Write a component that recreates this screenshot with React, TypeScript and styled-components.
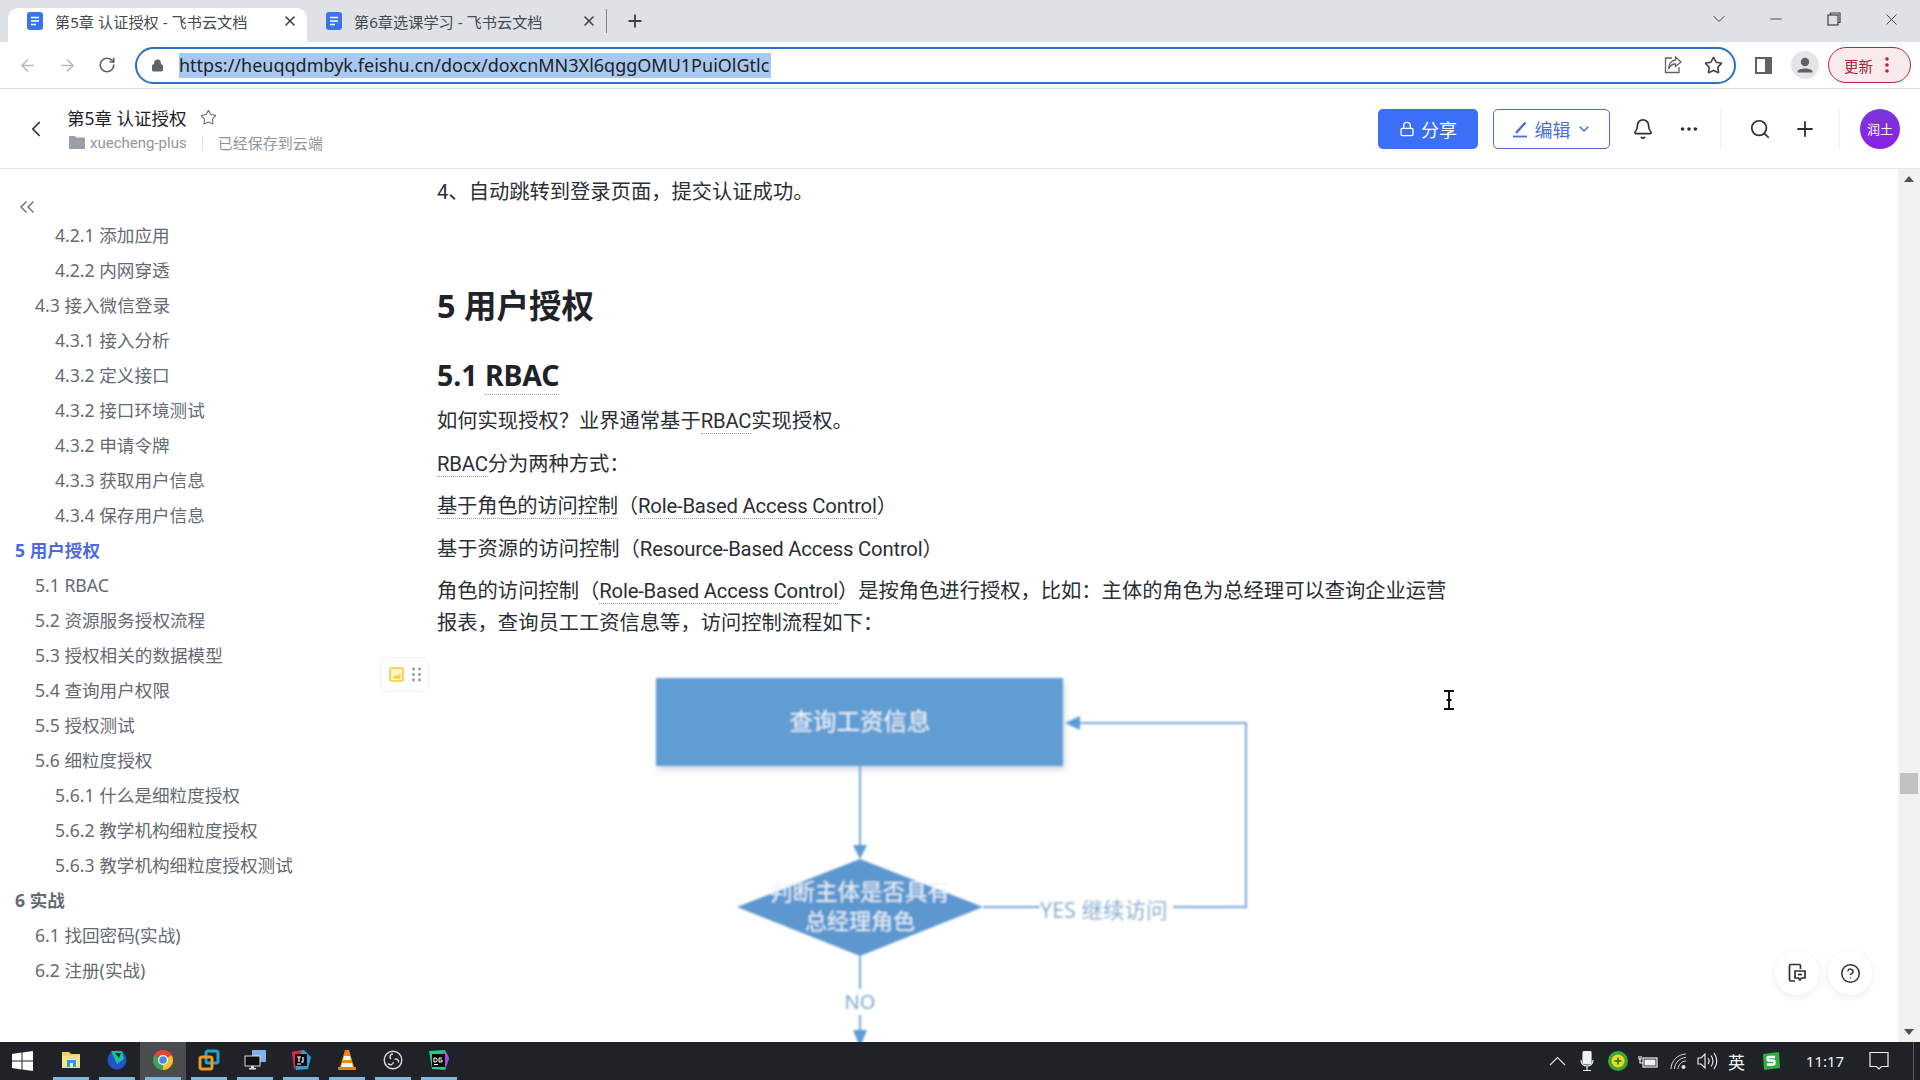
import styled, { createGlobalStyle } from "styled-components";
import {
  ArrowLeft,
  ArrowRight,
  Bell,
  ChevronDown,
  ChevronLeft,
  ChevronsLeft,
  CircleHelp,
  Lock,
  Minus,
  MoreHorizontal,
  Plus,
  RotateCw,
  Search,
  Star,
  X,
} from "lucide-react";

const GlobalStyle = createGlobalStyle`
  html, body {
    margin: 0;
    padding: 0;
    background: #fff;
    overflow: hidden;
  }
  * { box-sizing: border-box; }
`;

const Page = styled.div`
  width: 1920px;
  height: 1080px;
  display: flex;
  flex-direction: column;
  overflow: hidden;
  font-family: "Noto Sans", "Noto Sans CJK SC", sans-serif;
  color: #1f2329;
`;

/* browser chrome */
const TabStrip = styled.div`
  height: 42px;
  flex: none;
  background: #dee1e6;
  display: flex;
  padding-left: 8px;
`;
const Tab = styled.div<{ $active?: boolean }>`
  width: 299px;
  height: 34px;
  margin-top: 8px;
  padding: 0 0 8px 19px;
  display: flex;
  align-items: center;
  font-size: 15.2px;
  color: #45494e;
  background: ${(p) => (p.$active ? "#fff" : "transparent")};
  border-radius: 10px 10px 0 0;
`;
const TabTitle = styled.span`
  margin-left: 12px;
  width: 227px;
  white-space: nowrap;
`;
const TabDivider = styled.div`
  width: 1px;
  height: 24px;
  margin-top: 9px;
  background: #80868b;
`;
const NewTab = styled.div`
  width: 56px;
  display: flex;
  align-items: center;
  justify-content: center;
  color: #3c4043;
`;
const WindowControls = styled.div`
  margin-left: auto;
  display: flex;
`;
const WindowButton = styled.div`
  width: 57.5px;
  height: 38px;
  display: flex;
  align-items: center;
  justify-content: center;
  color: #3c4043;
`;
const Toolbar = styled.div`
  height: 47px;
  flex: none;
  display: flex;
  align-items: center;
  padding: 0 0 0 7px;
  border-bottom: 1px solid #dadce0;
`;
const NavButton = styled.div<{ $off?: boolean }>`
  width: 40px;
  display: flex;
  justify-content: center;
  color: ${(p) => (p.$off ? "#b4b7bb" : "#5f6368")};
`;
const Omnibox = styled.div`
  width: 1601px;
  height: 37px;
  margin-left: 8px;
  border: 2.5px solid #2a70c6;
  border-radius: 19px;
  display: flex;
  align-items: center;
  padding-left: 14px;
  color: #5f6368;
`;
const Url = styled.span`
  margin-left: 15px;
  padding: 0;
  height: 25px;
  line-height: 25px;
  width: 592px;
  overflow: hidden;
  white-space: nowrap;
  font-size: 18px;
  color: #202124;
  background: #a9c8ef;
`;
const OmniActions = styled.div`
  margin-left: auto;
  padding-right: 11px;
  display: flex;
  gap: 21px;
  align-items: center;
`;
const ProfileGroup = styled.div`
  margin-left: 7px;
  display: flex;
  align-items: center;
`;
const ProfileCell = styled.div`
  width: 41px;
  display: flex;
  justify-content: center;
`;
const UpdatePill = styled.div`
  width: 83px;
  height: 36px;
  margin-left: 3px;
  border: 1.5px solid #b3263e;
  border-radius: 18px;
  background: #fbeaec;
  color: #a8223a;
  font-size: 14.5px;
  display: flex;
  align-items: center;
  padding-left: 15px;
  gap: 12px;
`;

/* doc header */
const DocHeader = styled.div`
  height: 80px;
  flex: none;
  display: flex;
  align-items: center;
  padding-right: 20px;
  border-bottom: 1px solid #e6e7e9;
`;
const BackCell = styled.div`
  width: 67px;
  padding-left: 23px;
  display: flex;
  color: #2b2f36;
`;
const DocMeta = styled.div`
  display: flex;
  flex-direction: column;
  gap: 1px;
  padding-top: 1px;
`;
const DocTitleRow = styled.div`
  display: flex;
  align-items: center;
  gap: 13px;
  font-size: 17.5px;
  height: 26px;
  color: #1f2329;
`;
const DocSubRow = styled.div`
  display: flex;
  align-items: center;
  font-family: Roboto, "Noto Sans CJK SC", sans-serif;
  font-size: 15px;
  height: 22px;
  color: #8f959e;
  padding-left: 2px;
`;
const FolderName = styled.span`
  margin-left: 5px;
`;
const SubDivider = styled.span`
  width: 1px;
  height: 16px;
  background: #dee0e3;
  margin: 0 15px 0 15px;
`;
const HeaderActions = styled.div`
  margin-left: auto;
  display: flex;
  align-items: center;
`;
const ShareButton = styled.div`
  width: 100px;
  height: 40px;
  border-radius: 5px;
  background: #3b6ff5;
  color: #fff;
  font-size: 18px;
  display: flex;
  align-items: center;
  justify-content: center;
  gap: 6px;
`;
const EditButton = styled.div`
  width: 117px;
  height: 40px;
  margin-left: 15px;
  border-radius: 5px;
  border: 1px solid #4c6ed4;
  color: #4c6ed4;
  font-size: 18px;
  display: flex;
  align-items: center;
  justify-content: center;
  gap: 5px;
`;
const HeaderIcon = styled.div<{ $ml: number }>`
  width: 28px;
  margin-left: ${(p) => p.$ml}px;
  display: flex;
  justify-content: center;
  color: #2b2f36;
`;
const HeaderDivider = styled.div<{ $ml: number }>`
  width: 1px;
  height: 40px;
  margin-left: ${(p) => p.$ml}px;
  background: #eeeff0;
`;
const Avatar = styled.div`
  width: 40px;
  height: 40px;
  margin-left: 20px;
  border-radius: 50%;
  background: linear-gradient(#7b35d8, #8a22e6);
  color: #fff;
  font-size: 13px;
  display: flex;
  align-items: center;
  justify-content: center;
`;

/* main area */
const Main = styled.div`
  flex: 1;
  min-height: 0;
  display: flex;
  position: relative;
  overflow: hidden;
`;
const Sidebar = styled.nav`
  width: 437px;
  flex: none;
  padding-top: 26px;
`;
const Collapse = styled.div`
  height: 24px;
  margin-bottom: -1.5px;
  padding-left: 15px;
  color: #646a73;
`;
const TocItem = styled.div<{ $level: number; $active?: boolean }>`
  height: 35px;
  line-height: 35px;
  font-size: 17.6px;
  white-space: nowrap;
  padding-left: ${(p) => [15, 35, 55][p.$level]}px;
  font-weight: ${(p) => (p.$level === 0 ? 700 : 400)};
  color: ${(p) => (p.$active ? "#4e69e0" : "#646a73")};
`;
const Content = styled.main`
  flex: 1;
  padding-top: 7px;
  overflow: hidden;
`;
const Para = styled.p`
  margin: 0 0 10.5px;
  width: 1020px;
  font-family: Roboto, "Noto Sans CJK SC", sans-serif;
  font-size: 20.3px;
  line-height: 32px;
  color: #2b2f36;
`;
const H1 = styled.h1`
  margin: 76px 0 0;
  font-size: 32.5px;
  line-height: 44px;
  font-weight: 700;
`;
const H2 = styled.h2`
  margin: 28px 0 0;
  font-size: 28.5px;
  line-height: 38px;
  font-weight: 700;
`;
const ParaGroup = styled.div`
  margin-top: 11px;
`;
const Latin = styled.span`
  letter-spacing: -0.2px;
`;
const Term = styled(Latin)`
  border-bottom: 1px dotted #9aa0a8;
`;
const Flow = styled.svg`
  display: block;
  margin-top: 8.5px;
`;
const ScrollTrack = styled.div`
  width: 22px;
  flex: none;
  background: #f1f1f1;
  position: relative;
  display: flex;
  flex-direction: column;
  justify-content: space-between;
  align-items: center;
  padding: 7px 0;
`;
const ScrollThumb = styled.div`
  position: absolute;
  left: 2px;
  top: 604px;
  width: 18px;
  height: 21px;
  background: #c1c1c1;
`;
const ScrollArrow = styled.div<{ $down?: boolean }>`
  width: 0;
  height: 0;
  border-left: 5px solid transparent;
  border-right: 5px solid transparent;
  ${(p) => (p.$down ? "border-top: 6px solid #505050;" : "border-bottom: 6px solid #505050;")}
`;
const BlockTool = styled.div`
  position: absolute;
  left: 380px;
  top: 488px;
  width: 49px;
  height: 35px;
  border-radius: 6px;
  border: 1px solid #f0f1f2;
  background: #fff;
  display: flex;
  align-items: center;
  justify-content: center;
  gap: 8px;
`;
const FloatButton = styled.div<{ $left: number }>`
  position: absolute;
  left: ${(p) => p.$left}px;
  top: 782px;
  width: 44px;
  height: 44px;
  border-radius: 50%;
  background: #fff;
  box-shadow: 0 2px 10px rgba(0, 0, 0, 0.08);
  display: flex;
  align-items: center;
  justify-content: center;
  color: #2b2f36;
`;
const TextCursor = styled.svg`
  position: absolute;
  left: 1443px;
  top: 521px;
`;

/* taskbar */
const Taskbar = styled.div`
  height: 38px;
  flex: none;
  background: #1f2328;
  display: flex;
  align-items: stretch;
  color: #fff;
`;
const StartCell = styled.div`
  width: 48px;
  display: flex;
  align-items: center;
  padding-left: 12px;
`;
const TaskCell = styled.div<{ $active?: boolean }>`
  width: 46px;
  position: relative;
  display: flex;
  align-items: center;
  justify-content: center;
  padding-bottom: 2px;
  background: ${(p) => (p.$active ? "#4b4c4e" : "transparent")};
  &::after {
    content: "";
    position: absolute;
    left: 5px;
    right: 5px;
    bottom: 0;
    height: 3px;
    background: #84b6dc;
  }
`;
const Tray = styled.div`
  margin-left: auto;
  display: flex;
  align-items: center;
  padding-right: 6px;
`;
const TrayItem = styled.div<{ $w: number; $fs?: number }>`
  width: ${(p) => p.$w}px;
  display: flex;
  justify-content: center;
  align-items: center;
  font-size: ${(p) => p.$fs ?? 15}px;
  color: #f2f2f2;
`;
const TrayEdge = styled.div`
  width: 1px;
  height: 38px;
  margin-left: 14px;
  background: #5a5d60;
`;

const DocIcon = () => (
  <svg width="16" height="18" viewBox="0 0 16 18">
    <rect width="16" height="18" rx="3" fill="#3b74ea" />
    <path d="M4 5.5h8M4 9h8M4 12.5h5" stroke="#fff" strokeWidth="1.4" />
  </svg>
);

const ChromeIcon = ({ size = 22 }: { size?: number }) => (
  <svg width={size} height={size} viewBox="0 0 24 24">
    <path d="M12 12L2.5 6.5A11 11 0 0 1 21.5 6.5Z" fill="#e0463a" />
    <path d="M12 12L21.5 6.5A11 11 0 0 1 12 23Z" fill="#f6c02d" />
    <path d="M12 12L12 23A11 11 0 0 1 2.5 6.5Z" fill="#3ca454" />
    <circle cx="12" cy="12" r="5.4" fill="#fff" />
    <circle cx="12" cy="12" r="4.2" fill="#4a88e8" />
  </svg>
);

const toc: { t: string; l: number; a?: boolean }[] = [
  { t: "4.2.1 添加应用", l: 2 },
  { t: "4.2.2 内网穿透", l: 2 },
  { t: "4.3 接入微信登录", l: 1 },
  { t: "4.3.1 接入分析", l: 2 },
  { t: "4.3.2 定义接口", l: 2 },
  { t: "4.3.2 接口环境测试", l: 2 },
  { t: "4.3.2 申请令牌", l: 2 },
  { t: "4.3.3 获取用户信息", l: 2 },
  { t: "4.3.4 保存用户信息", l: 2 },
  { t: "5 用户授权", l: 0, a: true },
  { t: "5.1 RBAC", l: 1 },
  { t: "5.2 资源服务授权流程", l: 1 },
  { t: "5.3 授权相关的数据模型", l: 1 },
  { t: "5.4 查询用户权限", l: 1 },
  { t: "5.5 授权测试", l: 1 },
  { t: "5.6 细粒度授权", l: 1 },
  { t: "5.6.1 什么是细粒度授权", l: 2 },
  { t: "5.6.2 教学机构细粒度授权", l: 2 },
  { t: "5.6.3 教学机构细粒度授权测试", l: 2 },
  { t: "6 实战", l: 0 },
  { t: "6.1 找回密码(实战)", l: 1 },
  { t: "6.2 注册(实战)", l: 1 },
];

const FlowChart = () => (
  <Flow width="860" height="420" viewBox="0 0 860 420">
    <defs>
      <filter id="soft" x="-5%" y="-5%" width="110%" height="110%">
        <feGaussianBlur stdDeviation="0.9" />
      </filter>
      <filter id="drop" x="-10%" y="-20%" width="120%" height="150%">
        <feGaussianBlur stdDeviation="3" />
      </filter>
    </defs>
    <g filter="url(#soft)">
      <rect x="221" y="32" width="407" height="88" fill="#a9b8c6" filter="url(#drop)" opacity="0.5" />
      <rect x="219" y="28" width="407" height="88" fill="#609dd3" />
      <text x="423" y="80" textAnchor="middle" fontSize="23.5" fill="#f2f6fa">查询工资信息</text>
      <path d="M423 116V197" stroke="#74aadb" strokeWidth="2" fill="none" />
      <path d="M416 195H430L423 209Z" fill="#5b9bd5" />
      <path d="M300 257L423 209L546 257L423 306Z" fill="#5b97cf" />
      <text x="423" y="250" textAnchor="middle" fontSize="22.5" fill="#eef4fa">判断主体是否具有</text>
      <text x="423" y="279" textAnchor="middle" fontSize="22" fill="#eef4fa">总经理角色</text>
      <path d="M546 257H809V73H642" stroke="#74aadb" strokeWidth="2" fill="none" />
      <path d="M628 73L643 66V80Z" fill="#5b9bd5" />
      <rect x="603" y="245" width="133" height="28" fill="#fff" />
      <text x="603" y="268" fontSize="21.5" fill="#7ba7cc">YES 继续访问</text>
      <path d="M423 306V339M423 365V383" stroke="#74aadb" strokeWidth="2" fill="none" />
      <text x="423" y="359" textAnchor="middle" fontSize="20" fill="#7ba7cc">NO</text>
      <path d="M416 380H430L423 397Z" fill="#5b9bd5" />
    </g>
  </Flow>
);

export default function App() {
  return (
    <Page>
      <GlobalStyle />
      <TabStrip>
        <Tab $active>
          <DocIcon />
          <TabTitle>第5章 认证授权 - 飞书云文档</TabTitle>
          <X size={16} strokeWidth={2.4} color="#3c4043" />
        </Tab>
        <Tab>
          <DocIcon />
          <TabTitle>第6章选课学习 - 飞书云文档</TabTitle>
          <X size={16} strokeWidth={2.4} color="#3c4043" />
        </Tab>
        <TabDivider />
        <NewTab>
          <Plus size={20} strokeWidth={2.2} />
        </NewTab>
        <WindowControls>
          <WindowButton>
            <ChevronDown size={20} strokeWidth={1.2} />
          </WindowButton>
          <WindowButton>
            <Minus size={18} strokeWidth={1.2} />
          </WindowButton>
          <WindowButton>
            <svg width="14" height="14" viewBox="0 0 14 14" fill="none" stroke="#3c4043" strokeWidth="1.2">
              <rect x="1" y="3" width="10" height="10" />
              <path d="M3.5 3V1H13V10.5H11" />
            </svg>
          </WindowButton>
          <WindowButton>
            <X size={19} strokeWidth={1.2} />
          </WindowButton>
        </WindowControls>
      </TabStrip>

      <Toolbar>
        <NavButton $off>
          <ArrowLeft size={19} />
        </NavButton>
        <NavButton $off>
          <ArrowRight size={19} />
        </NavButton>
        <NavButton>
          <RotateCw size={18} strokeWidth={2.2} />
        </NavButton>
        <Omnibox>
          <Lock size={13} fill="#5f6368" strokeWidth={2.4} />
          <Url>https://heuqqdmbyk.feishu.cn/docx/doxcnMN3Xl6qggOMU1PuiOlGtlc</Url>
          <OmniActions>
            <svg width="20" height="20" viewBox="0 0 20 20" fill="none" stroke="#5f6368" strokeWidth="1.3">
              <path d="M9 3H2.5V17.5H16V12" />
              <path d="M12.5 2L18 7L12.5 11.5V9C9 9 7 10.5 5.5 14C5.5 9.5 8 5.5 12.5 5Z" />
            </svg>
            <Star size={19} strokeWidth={2} color="#3c4043" />
          </OmniActions>
        </Omnibox>
        <ProfileGroup>
          <ProfileCell>
            <svg width="17" height="17" viewBox="0 0 17 17">
              <path d="M0 0H17V17H0Z" fill="#5f6368" />
              <path d="M2 2H10V15H2Z" fill="#fff" />
            </svg>
          </ProfileCell>
          <ProfileCell>
            <svg width="28" height="28" viewBox="0 0 28 28">
              <circle cx="14" cy="14" r="14" fill="#e3e5e8" />
              <circle cx="14" cy="11" r="4.2" fill="#5f6368" />
              <path d="M6.5 20.5C7 16.5 21 16.5 21.5 20.5V21.5H6.5Z" fill="#5f6368" />
            </svg>
          </ProfileCell>
          <UpdatePill>
            <span>更新</span>
            <svg width="4" height="18" viewBox="0 0 4 18" fill="#b3263e">
              <circle cx="2" cy="3" r="1.8" />
              <circle cx="2" cy="9" r="1.8" />
              <circle cx="2" cy="15" r="1.8" />
            </svg>
          </UpdatePill>
        </ProfileGroup>
      </Toolbar>

      <DocHeader>
        <BackCell>
          <ChevronLeft size={26} strokeWidth={1.6} />
        </BackCell>
        <DocMeta>
          <DocTitleRow>
            <span>第5章 认证授权</span>
            <Star size={17} strokeWidth={1.5} color="#646a73" />
          </DocTitleRow>
          <DocSubRow>
            <svg width="16" height="13" viewBox="0 0 16 13" fill="#9a9ea6">
              <path d="M0 1C0 .4.4 0 1 0H6L7.5 1.5H15C15.6 1.5 16 1.9 16 2.5V12C16 12.6 15.6 13 15 13H1C.4 13 0 12.6 0 12Z" />
            </svg>
            <FolderName>xuecheng-plus</FolderName>
            <SubDivider />
            <span>已经保存到云端</span>
          </DocSubRow>
        </DocMeta>
        <HeaderActions>
          <ShareButton>
            <Lock size={16} strokeWidth={2} />
            分享
          </ShareButton>
          <EditButton>
            <svg width="18" height="18" viewBox="0 0 18 18" fill="none" stroke="#4c6ed4" strokeWidth="1.8">
              <path d="M1 16.5H15" />
              <path d="M4 13L13.5 2.5" strokeWidth="2.4" />
            </svg>
            编辑
            <ChevronDown size={16} strokeWidth={2.2} />
          </EditButton>
          <HeaderIcon $ml={19}>
            <Bell size={22} strokeWidth={1.8} />
          </HeaderIcon>
          <HeaderIcon $ml={18}>
            <MoreHorizontal size={22} strokeWidth={2} />
          </HeaderIcon>
          <HeaderDivider $ml={17} />
          <HeaderIcon $ml={25}>
            <Search size={22} strokeWidth={1.9} />
          </HeaderIcon>
          <HeaderIcon $ml={17}>
            <Plus size={24} strokeWidth={1.8} />
          </HeaderIcon>
          <HeaderDivider $ml={20} />
          <Avatar>润土</Avatar>
        </HeaderActions>
      </DocHeader>

      <Main>
        <Sidebar>
          <Collapse>
            <ChevronsLeft size={24} strokeWidth={1.4} />
          </Collapse>
          {toc.map((item, i) => (
            <TocItem key={i} $level={item.l} $active={item.a}>
              {item.t}
            </TocItem>
          ))}
        </Sidebar>
        <Content>
          <Para>4、自动跳转到登录页面，提交认证成功。</Para>
          <H1>5 用户授权</H1>
          <H2>
            5.1 <Term>RBAC</Term>
          </H2>
          <ParaGroup>
            <Para>
              如何实现授权？业界通常基于<Term>RBAC</Term>实现授权。
            </Para>
            <Para>
              <Term>RBAC</Term>分为两种方式：
            </Para>
            <Para>
              <Term>基于角色的访问控制</Term>（<Term>Role-Based Access Control</Term>）
            </Para>
            <Para>
              基于资源的访问控制（<Latin>Resource-Based Access Control</Latin>）
            </Para>
            <Para>
              角色的访问控制（<Term>Role-Based Access Control</Term>
              ）是按角色进行授权，比如：主体的角色为总经理可以查询企业运营报表，查询员工工资信息等，访问控制流程如下：
            </Para>
          </ParaGroup>
          <FlowChart />
        </Content>
        <ScrollTrack>
          <ScrollArrow />
          <ScrollThumb />
          <ScrollArrow $down />
        </ScrollTrack>
        <BlockTool>
          <svg width="15" height="15" viewBox="0 0 15 15">
            <rect x="1" y="1" width="13" height="13" rx="1.5" fill="#fff5c4" stroke="#f3cd3a" strokeWidth="1.6" />
            <path d="M3.5 11.5L6.5 8L8.5 9.5L11.5 6V11.5Z" fill="#f3cd3a" />
          </svg>
          <svg width="9" height="15" viewBox="0 0 9 15" fill="#8f959e">
            <circle cx="1.5" cy="2" r="1.4" />
            <circle cx="7.5" cy="2" r="1.4" />
            <circle cx="1.5" cy="7.5" r="1.4" />
            <circle cx="7.5" cy="7.5" r="1.4" />
            <circle cx="1.5" cy="13" r="1.4" />
            <circle cx="7.5" cy="13" r="1.4" />
          </svg>
        </BlockTool>
        <FloatButton $left={1775}>
          <svg width="20" height="20" viewBox="0 0 20 20" fill="none" stroke="#2b2f36" strokeWidth="1.7">
            <path d="M8 18H4C3 18 2.5 17.5 2.5 16.5V3C2.5 2 3 1.5 4 1.5H12C13 1.5 13.5 2 13.5 3V6" />
            <path d="M8 8H18V15H14.5L13 17L11.5 15H8Z" />
            <path d="M11 11.5H15" />
          </svg>
        </FloatButton>
        <FloatButton $left={1828}>
          <CircleHelp size={21} strokeWidth={1.7} />
        </FloatButton>
        <TextCursor width="12" height="20" viewBox="0 0 12 20" fill="none" stroke="#111" strokeWidth="2">
          <path d="M1 1H11M6 1V19M1 19H11M3.5 10H8.5" />
        </TextCursor>
      </Main>

      <Taskbar>
        <StartCell>
          <svg width="21" height="20" viewBox="0 0 21 20" fill="#fff">
            <path d="M0 3L9.5 1.6V9.5H0ZM10.5 1.4L21 0V9.5H10.5ZM0 10.5H9.5V18.4L0 17ZM10.5 10.5H21V20L10.5 18.6Z" />
          </svg>
        </StartCell>
        <TaskCell>
          <svg width="20" height="20" viewBox="0 0 20 20">
            <path d="M1 2H8L10 4H19V18H1Z" fill="#f6d366" />
            <path d="M1 6H19V18H1Z" fill="#fbe08a" />
            <path d="M6 10H15V17H12V13H9V17H6Z" fill="#2f9ae0" />
          </svg>
        </TaskCell>
        <TaskCell>
          <svg width="22" height="22" viewBox="0 0 22 22">
            <circle cx="11" cy="11" r="9.5" fill="#2553c7" />
            <path d="M5 2H16L18 10L11 15Z" fill="#19c39a" />
            <path d="M9 4L15 4L13 9Z" fill="#1f2328" />
          </svg>
        </TaskCell>
        <TaskCell $active>
          <ChromeIcon />
        </TaskCell>
        <TaskCell>
          <svg width="22" height="22" viewBox="0 0 22 22" fill="none" strokeWidth="3">
            <rect x="8" y="2" width="12" height="12" rx="2" stroke="#25a2c9" />
            <rect x="2" y="8" width="12" height="12" rx="2" stroke="#ee9a22" />
          </svg>
        </TaskCell>
        <TaskCell>
          <svg width="22" height="20" viewBox="0 0 22 20">
            <rect x="8" y="0" width="14" height="12" fill="#7fb2e8" />
            <rect x="1" y="6" width="15" height="10" fill="#111" stroke="#ddd" />
            <path d="M7 16H10V18H12V19.5H5V18H7Z" fill="#ddd" />
          </svg>
        </TaskCell>
        <TaskCell>
          <svg width="22" height="22" viewBox="0 0 22 22">
            <path d="M2 3L14 1L21 8L18 20L6 21Z" fill="#2a9fd8" />
            <path d="M2 3L12 1L8 12L4 21Z" fill="#e0224f" />
            <rect x="5" y="5" width="12" height="12" fill="#0c0c0c" />
            <path d="M7 8H11M9 8V13M13 8V13H11" stroke="#fff" strokeWidth="1.2" fill="none" />
            <path d="M7 15H11" stroke="#fff" strokeWidth="1" />
          </svg>
        </TaskCell>
        <TaskCell>
          <svg width="20" height="22" viewBox="0 0 20 22">
            <path d="M8 1H12L17 18H3Z" fill="#f08a12" />
            <path d="M7 7H13L14 11H6Z" fill="#f4f4f4" />
            <path d="M5 14H15L16 18H4Z" fill="#f4f4f4" />
            <path d="M1 18H19V21H1Z" fill="#e8810c" />
          </svg>
        </TaskCell>
        <TaskCell>
          <svg width="20" height="20" viewBox="0 0 20 20" fill="none" stroke="#ddd" strokeWidth="1.4">
            <circle cx="10" cy="10" r="8.8" />
            <path d="M10 4C7 4 6 7 8 9M15.5 12.5C16 9.5 13.5 8 11.5 9.5M5 13.5C7 15.5 10 15 10.5 12" />
          </svg>
        </TaskCell>
        <TaskCell>
          <svg width="22" height="22" viewBox="0 0 22 22">
            <path d="M1 2L17 1L21 9L17 21L4 20Z" fill="#2fc58a" />
            <path d="M15 1L21 9L17 21Z" fill="#a84ad8" />
            <rect x="4" y="5" width="13" height="13" fill="#0c0c0c" />
            <path d="M6 9V13H8L9 12V10L8 9ZM14 9H11V13H14V11H12.5" stroke="#fff" strokeWidth="1" fill="none" />
            <path d="M6 15.5H10" stroke="#fff" strokeWidth="1" />
          </svg>
        </TaskCell>
        <Tray>
          <TrayItem $w={30}>
            <svg width="17" height="10" viewBox="0 0 17 10" fill="none" stroke="#ddd" strokeWidth="1.2">
              <path d="M1 9L8.5 1.5L16 9" />
            </svg>
          </TrayItem>
          <TrayItem $w={30}>
            <svg width="14" height="20" viewBox="0 0 14 20" fill="none" stroke="#f2f2f2" strokeWidth="1.2">
              <rect x="3" y="0" width="8" height="13" rx="2" fill="#f2f2f2" />
              <path d="M1 9C1 17 13 17 13 9M7 15V19M3 19.5H11" />
            </svg>
          </TrayItem>
          <TrayItem $w={31}>
            <svg width="20" height="20" viewBox="0 0 20 20">
              <circle cx="10" cy="10" r="10" fill="#3fa534" />
              <circle cx="10" cy="10" r="6.5" fill="#f1d81e" />
              <path d="M6.5 10H13.5M10 6.5V13.5" stroke="#2f8d2a" strokeWidth="2" />
            </svg>
          </TrayItem>
          <TrayItem $w={30}>
            <svg width="20" height="13" viewBox="0 0 20 13" fill="none" stroke="#f2f2f2" strokeWidth="1.2">
              <path d="M1 1V3.5C1 5 3 5 3 3.5V1M2 5V8H5" />
              <rect x="5" y="3" width="14" height="9" />
              <rect x="6.5" y="4.5" width="11" height="6" fill="#f2f2f2" stroke="none" />
            </svg>
          </TrayItem>
          <TrayItem $w={30}>
            <svg width="17" height="17" viewBox="0 0 17 17" fill="none" stroke="#d8d8d8" strokeWidth="1">
              <path d="M1 16C1 8 8 1 16 1M4.5 16C4.5 10 10 4.5 16 4.5M8 16C8 12 12 8 16 8" />
              <circle cx="13.5" cy="14" r="1.6" fill="#f2f2f2" />
            </svg>
          </TrayItem>
          <TrayItem $w={29}>
            <svg width="21" height="18" viewBox="0 0 21 18" fill="none" stroke="#f2f2f2" strokeWidth="1.1">
              <path d="M1 6H4L8 2V16L4 12H1Z" />
              <path d="M11 6C12.5 8 12.5 10 11 12M14 3.5C16.5 7 16.5 11 14 14.5M17 1C20.5 6 20.5 12 17 17" />
            </svg>
          </TrayItem>
          <TrayItem $w={29} $fs={17}>英</TrayItem>
          <TrayItem $w={40}>
            <svg width="20" height="20" viewBox="0 0 20 20">
              <path d="M2 3L18 1L19 17L3 19Z" fill="#2fae45" />
              <path d="M14 6H8C6 6 6 9.5 8 9.5H12C14 9.5 14 13.5 12 13.5H6" stroke="#fff" strokeWidth="2.4" fill="none" />
            </svg>
          </TrayItem>
          <TrayItem $w={68}>11:17</TrayItem>
          <TrayItem $w={40}>
            <svg width="20" height="20" viewBox="0 0 20 20" fill="none" stroke="#f2f2f2" strokeWidth="1.2">
              <path d="M1 1.5H19V15.5H12.5L10 18L7.5 15.5H1Z" />
            </svg>
          </TrayItem>
          <TrayEdge />
        </Tray>
      </Taskbar>
    </Page>
  );
}
